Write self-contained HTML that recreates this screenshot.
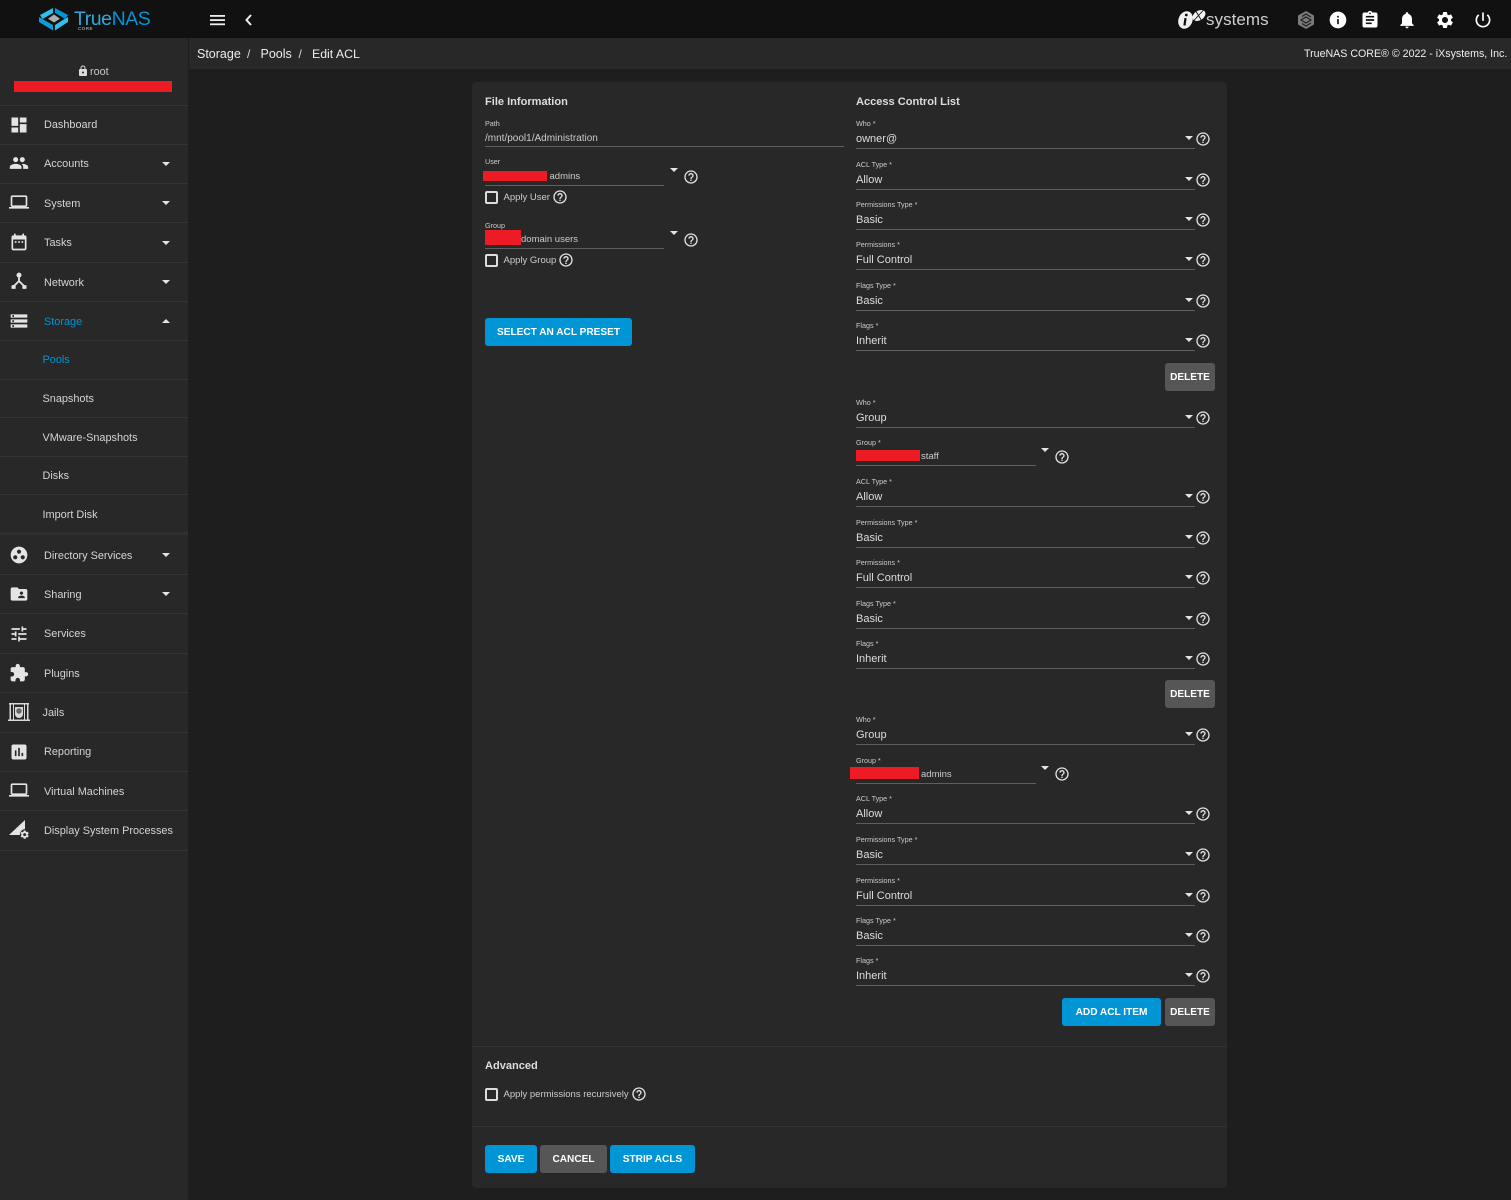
<!DOCTYPE html>
<html lang="en"><head><meta charset="utf-8"><title>TrueNAS - Edit ACL</title>
<style>
*{box-sizing:border-box}
html,body{margin:0;padding:0;width:1511px;height:1200px;overflow:hidden;background:#1e1e1e;font-family:"Liberation Sans",sans-serif;color:#e0e0e0}
.a{position:absolute}
#top{position:absolute;left:0;top:0;width:1511px;height:38px;background:#111}
#side{position:absolute;left:0;top:38px;width:188px;height:1162px;background:#282828}
#crumb{position:absolute;left:189px;top:38px;width:1322px;height:31px;background:#282828}
#card{position:absolute;left:472px;top:82px;width:755px;height:1106px;background:#282828;border-radius:4px}
.t{position:absolute;white-space:nowrap;line-height:16px;font-size:10.9px;color:#d4d4d4;margin-top:1px}
.sep{position:absolute;left:0;width:188px;height:1px;background:#343434}
.sep2{position:absolute;left:0;width:188px;height:3px;background:#303030}
.ic{position:absolute;fill:#e4e4e4}
.c{position:absolute;width:0;height:0;border-left:4px solid transparent;border-right:4px solid transparent;border-top:4px solid #e4e4e4}
.cu{border-top:0;border-bottom:4px solid #e4e4e4}
.r{position:absolute;left:856px;width:339px;height:30px;border-bottom:1px solid #5e5e5e}
.r .l{position:absolute;left:0;top:0;font-size:7.2px;line-height:10px;color:#ccc;white-space:nowrap}
.r .v{position:absolute;left:0;top:12px;font-size:11px;line-height:16px;color:#ddd;white-space:nowrap}
.r .c{left:329px;top:17px}
.r svg{position:absolute;left:339px;top:12px;width:16px;height:16px;fill:#e4e4e4}
.h{position:absolute;width:16px;height:16px;fill:#e4e4e4}
.cb{position:absolute;width:12.5px;height:12.5px;border:2px solid #ddd;border-radius:2px}
.b{position:absolute;height:28px;line-height:29px;text-align:center;color:#fff;font-size:10.1px;font-weight:bold;border-radius:3px;background:#0095d5;white-space:nowrap}
.g{background:#565656}
.red{position:absolute;background:#ed1c24}
.ln{position:absolute;height:1px;background:#5e5e5e}
.s{position:absolute;height:1px;background:#333}
.lb{font-size:7.2px;line-height:10px;color:#ccc;margin-top:0}
.sm{font-size:9.5px;color:#ccc}
.hd{font-size:11.05px;font-weight:bold;color:#ddd}
</style></head><body>
<svg width="0" height="0" style="position:absolute"><defs>
<symbol id="help" viewBox="0 0 24 24"><path d="M11 18h2v-2h-2v2zm1-16C6.48 2 2 6.48 2 12s4.48 10 10 10 10-4.48 10-10S17.52 2 12 2zm0 18c-4.41 0-8-3.59-8-8s3.59-8 8-8 8 3.59 8 8-3.59 8-8 8zm0-14c-2.21 0-4 1.79-4 4h2c0-1.1.9-2 2-2s2 .9 2 2c0 2-3 1.75-3 5h2c0-2.25 3-2.5 3-5 0-2.21-1.79-4-4-4z"/></symbol>
<symbol id="laptop" viewBox="0 0 24 24"><path d="M20 18c1.1 0 1.99-.9 1.99-2L22 6c0-1.1-.9-2-2-2H4c-1.1 0-2 .9-2 2v10c0 1.1.9 2 2 2H0v2h24v-2h-4zM4 6h16v10H4V6z"/></symbol>
</defs></svg>

<div id="top">
<svg class="a" style="left:38px;top:7px" width="32" height="24" viewBox="38 7 32 24">
<polygon fill="#31beec" points="40,15 53,8 53,13 46,17 42.5,19"/>
<polygon fill="#0095d5" points="55,8 68,15 65,19 62,17 55,13"/>
<polygon fill="#0f9ad8" points="39,17 45,20.5 53,25 53,30.5 39,22"/>
<polygon fill="#31beec" points="68,17 62,20.5 55,25 55,30.5 68,22"/>
<polygon fill="#aeadae" points="54,14.5 60,18.8 54,22.5 48,18.8"/>
</svg>
<div class="t" style="left:74px;top:6px;font-size:19.5px;line-height:24px;color:#31a8dc;letter-spacing:-.45px">True<span style="color:#0095d5">NAS</span></div>
<div class="t" style="left:78px;top:25px;font-size:4.5px;line-height:6px;color:#999;letter-spacing:.5px;font-weight:bold">CORE</div>
<svg class="a" style="left:209px;top:12px;fill:#eee" width="16" height="16" viewBox="0 0 16 16"><rect x="1" y="3" width="15" height="1.8"/><rect x="1" y="7.2" width="15" height="1.8"/><rect x="1" y="11.4" width="15" height="1.8"/></svg>
<svg class="a" style="left:243px;top:13px" width="12" height="14" viewBox="0 0 12 14"><path d="M8 2L3.5 7 8 12" fill="none" stroke="#eee" stroke-width="2"/></svg>

<svg class="a" style="left:1176px;top:6px" width="32" height="26" viewBox="0 0 32 26">
<ellipse cx="9.500" cy="14" rx="7" ry="9" fill="#f2f2f2" transform="rotate(22 9.500 14)"/>
<rect x="8" y="12" width="2.200" height="7.500" fill="#111" transform="rotate(8 9 15)"/><circle cx="10.300" cy="9" r="1.400" fill="#111"/>
<ellipse cx="23" cy="9.500" rx="7" ry="4.800" fill="#f2f2f2" transform="rotate(-32 23 9.500)"/>
<path fill="none" stroke="#111" stroke-width=".9" d="M17.500 15L27.500 4M19.500 4.500l6 10"/>
</svg>
<div class="t" style="left:1206px;top:9px;font-size:17px;line-height:20px;color:#cfcfcf;letter-spacing:.05px">systems</div>
<svg class="a" style="left:1296px;top:10px" width="20" height="20" viewBox="0 0 20 20"><polygon fill="#7b7b7b" points="10,1 18,5.500 18,14.500 10,19 2,14.500 2,5.500"/><path d="M6 6.500L10 4l5 3M5 10l5-3 5 3-5 3zM6 13.500l4 2.500 5-3" fill="none" stroke="#222" stroke-width="1.200"/></svg>
<svg class="ic" style="left:1328px;top:10px" width="20" height="20" viewBox="0 0 24 24"><path fill="#fff" d="M12 2C6.480 2 2 6.480 2 12s4.480 10 10 10 10-4.480 10-10S17.520 2 12 2zm1 15h-2v-6h2v6zm0-8h-2V7h2v2z"/></svg>
<svg class="ic" style="left:1359.500px;top:10px" width="20" height="20" viewBox="0 0 24 24"><path fill="#fff" d="M19 3h-4.180C14.400 1.840 13.300 1 12 1c-1.300 0-2.400.840-2.820 2H5c-1.100 0-2 .900-2 2v14c0 1.100.900 2 2 2h14c1.100 0 2-.900 2-2V5c0-1.100-.900-2-2-2zm-7 0c.550 0 1 .450 1 1s-.450 1-1 1-1-.450-1-1 .450-1 1-1zm2 14H7v-2h7v2zm3-4H7v-2h10v2zm0-4H7V7h10v2z"/></svg>
<svg class="ic" style="left:1397px;top:10px" width="20" height="20" viewBox="0 0 24 24"><path fill="#fff" d="M12 22c1.100 0 2-.900 2-2h-4c0 1.100.890 2 2 2zm6-6v-5c0-3.070-1.640-5.640-4.500-6.320V4c0-.830-.670-1.500-1.500-1.500s-1.500.670-1.500 1.500v.680C7.630 5.360 6 7.920 6 11v5l-2 2v1h16v-1l-2-2z"/></svg>
<svg class="ic" style="left:1435px;top:10px" width="20" height="20" viewBox="0 0 24 24"><path fill="#fff" d="M19.140 12.940c.040-.300.060-.610.060-.940 0-.320-.020-.640-.070-.940l2.030-1.580c.180-.140.230-.410.120-.610l-1.920-3.320c-.120-.220-.370-.290-.590-.220l-2.390.960c-.500-.380-1.030-.700-1.620-.940l-.360-2.540c-.040-.240-.240-.410-.480-.410h-3.840c-.240 0-.430.170-.470.410l-.360 2.540c-.590.240-1.130.570-1.620.940l-2.390-.960c-.220-.080-.470 0-.590.220L2.740 8.870c-.120.210-.080.470.120.610l2.030 1.580c-.050.300-.090.630-.090.940s.020.640.070.940l-2.030 1.580c-.180.140-.230.410-.120.610l1.920 3.320c.120.220.370.290.590.220l2.390-.960c.500.380 1.030.700 1.620.940l.360 2.540c.050.240.240.410.480.410h3.840c.240 0 .440-.170.470-.410l.360-2.540c.590-.240 1.130-.560 1.620-.940l2.390.960c.220.080.470 0 .590-.220l1.920-3.320c.120-.220.070-.470-.120-.610l-2.010-1.580zM12 15.600c-1.980 0-3.600-1.620-3.600-3.600s1.620-3.600 3.600-3.600 3.600 1.620 3.600 3.600-1.620 3.600-3.600 3.600z"/></svg>
<svg class="ic" style="left:1472.500px;top:10px" width="20" height="20" viewBox="0 0 24 24"><path fill="#fff" d="M13 3h-2v10h2V3zm4.830 2.170l-1.420 1.420C17.990 7.860 19 9.810 19 12c0 3.870-3.130 7-7 7s-7-3.130-7-7c0-2.190 1.010-4.140 2.580-5.420L6.170 5.170C4.230 6.820 3 9.260 3 12c0 4.970 4.030 9 9 9s9-4.030 9-9c0-2.740-1.230-5.180-3.170-6.830z"/></svg>
</div>

<div id="side"></div>
<div id="crumb"></div>
<div class="t" style="left:197px;top:45px;font-size:12.5px;color:#eee">Storage</div>
<div class="t" style="left:247px;top:45px;font-size:12px;color:#ddd">/</div>
<div class="t" style="left:260.500px;top:45px;font-size:12.5px;color:#eee">Pools</div>
<div class="t" style="left:298.500px;top:45px;font-size:12px;color:#ddd">/</div>
<div class="t" style="left:312px;top:45px;font-size:12.3px;color:#eee">Edit ACL</div>
<div class="t" style="left:1304px;top:45px;font-size:10.65px;color:#eee">TrueNAS CORE® © 2022 - iXsystems, Inc.</div>

<svg class="ic" style="left:76.500px;top:65px" width="12" height="12" viewBox="0 0 24 24"><path fill="#ddd" d="M18 8h-1V6c0-2.760-2.240-5-5-5S7 3.240 7 6v2H6c-1.100 0-2 .900-2 2v10c0 1.100.900 2 2 2h12c1.100 0 2-.900 2-2V10c0-1.100-.900-2-2-2zm-6 9c-1.100 0-2-.900-2-2s.900-2 2-2 2 .900 2 2-.900 2-2 2zm3.100-9H8.900V6c0-1.710 1.390-3.100 3.100-3.100 1.710 0 3.100 1.390 3.100 3.100v2z"/></svg>
<div class="t" style="left:90px;top:63px;font-size:10.8px;color:#c8c8c8">root</div>
<div class="red" style="left:14px;top:81px;width:158px;height:11px"></div>

<div class="sep" style="top:105px"></div><div class="sep" style="top:144px"></div><div class="sep" style="top:183px"></div><div class="sep" style="top:222px"></div><div class="sep" style="top:262px"></div><div class="sep" style="top:301px"></div><div class="sep" style="top:340px"></div><div class="sep" style="top:379px"></div><div class="sep" style="top:417px"></div><div class="sep" style="top:456px"></div><div class="sep" style="top:494px"></div><div class="sep2" style="top:532px"></div><div class="sep" style="top:574px"></div><div class="sep" style="top:613px"></div><div class="sep" style="top:653px"></div><div class="sep" style="top:692px"></div><div class="sep" style="top:732px"></div><div class="sep" style="top:771px"></div><div class="sep" style="top:810px"></div><div class="sep" style="top:850px"></div>

<div class="t" style="left:44px;top:116px">Dashboard</div>
<div class="t" style="left:44px;top:155px">Accounts</div><div class="c" style="left:162px;top:162px"></div>
<div class="t" style="left:44px;top:195px">System</div><div class="c" style="left:162px;top:201px"></div>
<div class="t" style="left:44px;top:234px">Tasks</div><div class="c" style="left:162px;top:241px"></div>
<div class="t" style="left:44px;top:274px">Network</div><div class="c" style="left:162px;top:280px"></div>
<div class="t" style="left:44px;top:313px;color:#0095d5">Storage</div><div class="c cu" style="left:162px;top:319px"></div>
<div class="t" style="left:42.500px;top:351px;color:#0095d5">Pools</div>
<div class="t" style="left:42.500px;top:390px">Snapshots</div>
<div class="t" style="left:42.500px;top:429px">VMware-Snapshots</div>
<div class="t" style="left:42.500px;top:467px">Disks</div>
<div class="t" style="left:42.500px;top:506px">Import Disk</div>
<div class="t" style="left:44px;top:547px">Directory Services</div><div class="c" style="left:162px;top:553px"></div>
<div class="t" style="left:44px;top:586px">Sharing</div><div class="c" style="left:162px;top:592px"></div>
<div class="t" style="left:44px;top:625px">Services</div>
<div class="t" style="left:44px;top:665px">Plugins</div>
<div class="t" style="left:42.500px;top:704px">Jails</div>
<div class="t" style="left:44px;top:743px">Reporting</div>
<div class="t" style="left:44px;top:783px">Virtual Machines</div>
<div class="t" style="left:44px;top:822px">Display System Processes</div>

<svg class="ic" style="left:9px;top:114.500px" width="20" height="20" viewBox="0 0 24 24"><path d="M3 13h8V3H3v10zm0 8h8v-6H3v6zm10 0h8V11h-8v10zm0-18v6h8V3h-8z"/></svg>
<svg class="ic" style="left:9px;top:153px" width="20" height="20" viewBox="0 0 24 24"><path d="M16 11c1.660 0 2.990-1.340 2.990-3S17.660 5 16 5c-1.660 0-3 1.340-3 3s1.340 3 3 3zm-8 0c1.660 0 2.990-1.340 2.990-3S9.660 5 8 5C6.340 5 5 6.340 5 8s1.340 3 3 3zm0 2c-2.330 0-7 1.170-7 3.500V19h14v-2.500c0-2.330-4.670-3.500-7-3.500zm8 0c-.290 0-.620.020-.970.050 1.160.840 1.970 1.970 1.970 3.450V19h6v-2.500c0-2.330-4.670-3.500-7-3.500z"/></svg>
<svg class="ic" style="left:9px;top:192px" width="20" height="20" viewBox="0 0 24 24"><use href="#laptop"/></svg>
<svg class="ic" style="left:9px;top:232px" width="20" height="20" viewBox="0 0 24 24"><path d="M19 4h-1V2h-2v2H8V2H6v2H5c-1.100 0-2 .900-2 2v14c0 1.100.900 2 2 2h14c1.100 0 2-.900 2-2V6c0-1.100-.900-2-2-2zm0 16H5V9h14v11z"/><rect x="7" y="11" width="2" height="2"/><rect x="11" y="11" width="2" height="2"/><rect x="15" y="11" width="2" height="2"/></svg>
<svg class="ic" style="left:9px;top:271px" width="20" height="20" viewBox="0 0 24 24"><circle cx="12" cy="5" r="3"/><rect x="3" y="17" width="5" height="4.500" rx="1"/><rect x="16" y="17" width="5" height="4.500" rx="1"/><path d="M12 7v6M12 12l-6 6M12 12l6 6" stroke="#e4e4e4" stroke-width="2.200" fill="none"/></svg>
<svg class="ic" style="left:9px;top:311px" width="20" height="20" viewBox="0 0 24 24"><path d="M2 20h20v-4H2v4zm2-3h2v2H4v-2zM2 4v4h20V4H2zm4 3H4V5h2v2zm-4 7h20v-4H2v4zm2-3h2v2H4v-2z"/></svg>
<svg class="ic" style="left:9px;top:544.500px" width="20" height="20" viewBox="0 0 24 24"><path fill-rule="evenodd" d="M12 2a10 10 0 1 0 0 20 10 10 0 0 0 0-20zm0 3.500a2.500 2.500 0 1 1 0 5 2.500 2.500 0 0 1 0-5zm-4.500 6.800a2.500 2.500 0 1 1 0 5 2.500 2.500 0 0 1 0-5zm9 0a2.500 2.500 0 1 1 0 5 2.500 2.500 0 0 1 0-5z"/></svg>
<svg class="ic" style="left:9px;top:584px" width="20" height="20" viewBox="0 0 24 24"><path d="M20 6h-8l-2-2H4c-1.100 0-2 .900-2 2v12c0 1.100.900 2 2 2h16c1.100 0 2-.900 2-2V8c0-1.100-.900-2-2-2zm-5 3c1.100 0 2 .900 2 2s-.900 2-2 2-2-.900-2-2 .900-2 2-2zm4 8h-8v-1c0-1.330 2.670-2 4-2s4 .670 4 2v1z"/></svg>
<svg class="ic" style="left:9px;top:623.500px" width="20" height="20" viewBox="0 0 24 24"><path d="M3 17v2h6v-2H3zM3 5v2h10V5H3zm10 16v-2h8v-2h-8v-2h-2v6h2zM7 9v2H3v2h4v2h2V9H7zm14 4v-2H11v2h10zm-6-4h2V7h4V5h-4V3h-2v6z"/></svg>
<svg class="ic" style="left:9px;top:662.500px" width="20" height="20" viewBox="0 0 24 24"><path d="M20.500 11H19V7c0-1.100-.900-2-2-2h-4V3.500C13 2.120 11.880 1 10.500 1S8 2.120 8 3.500V5H4c-1.100 0-1.990.900-1.990 2v3.800H3.500c1.490 0 2.700 1.210 2.700 2.700s-1.210 2.700-2.700 2.700H2V20c0 1.100.900 2 2 2h3.800v-1.500c0-1.490 1.210-2.700 2.700-2.700 1.490 0 2.700 1.210 2.700 2.700V22H17c1.100 0 2-.900 2-2v-4h1.500c1.380 0 2.500-1.120 2.500-2.500S21.880 11 20.500 11z"/></svg>
<svg class="a" style="left:8px;top:702px" width="22" height="20" viewBox="0 0 22 20"><g fill="#d8d8d8"><rect x="1" y="1" width="20" height="1.500"/><rect x="0" y="17.500" width="22" height="1.500"/><rect x="1.500" y="2" width="1.500" height="16"/><rect x="19" y="2" width="1.500" height="16"/><rect x="5" y="2" width="1" height="16"/><rect x="16" y="2" width="1" height="16"/><path d="M7 5h8v7c0 2.500-2 4-4 4s-4-1.500-4-4z"/></g><circle cx="11" cy="9" r="2.800" fill="#666"/></svg>
<svg class="ic" style="left:9px;top:741.500px" width="20" height="20" viewBox="0 0 24 24"><path d="M19 3H5c-1.100 0-2 .900-2 2v14c0 1.100.900 2 2 2h14c1.100 0 2-.900 2-2V5c0-1.100-.900-2-2-2zM9 17H7v-7h2v7zm4 0h-2V7h2v10zm4 0h-2v-4h2v4z"/></svg>
<svg class="ic" style="left:9px;top:780px" width="20" height="20" viewBox="0 0 24 24"><use href="#laptop"/></svg>
<svg class="a" style="left:9px;top:819px;fill:#e4e4e4" width="21" height="21" viewBox="0 0 21 21"><path d="M0 16L16 1v9a5.500 5.500 0 0 0-5 6z"/><g transform="translate(10.500,10.500) scale(.43)"><path d="M19.140 12.940c.040-.300.060-.610.060-.940 0-.320-.020-.640-.070-.940l2.030-1.580c.180-.140.230-.410.120-.610l-1.920-3.320c-.120-.220-.370-.290-.590-.220l-2.390.960c-.500-.380-1.030-.700-1.620-.940l-.360-2.540c-.040-.240-.240-.410-.480-.410h-3.840c-.240 0-.430.170-.470.410l-.360 2.540c-.590.240-1.130.570-1.620.940l-2.390-.960c-.220-.080-.470 0-.590.220L2.740 8.870c-.120.210-.080.470.120.610l2.030 1.580c-.050.300-.090.630-.090.940s.020.640.070.940l-2.030 1.580c-.180.140-.230.410-.120.610l1.920 3.320c.120.220.370.290.590.220l2.390-.960c.500.380 1.030.700 1.620.940l.360 2.540c.050.240.240.410.480.410h3.840c.240 0 .440-.170.470-.410l.360-2.540c.590-.240 1.130-.560 1.620-.940l2.390.960c.220.080.470 0 .590-.220l1.920-3.320c.120-.220.070-.470-.120-.610l-2.010-1.580zM12 15.600c-1.980 0-3.600-1.620-3.600-3.600s1.620-3.600 3.600-3.600 3.600 1.620 3.600 3.600-1.620 3.600-3.600 3.600z"/></g></svg>

<div id="card"></div>
<div class="s" style="left:472px;top:1046px;width:755px"></div>
<div class="s" style="left:472px;top:1126px;width:755px"></div>

<div class="t hd" style="left:485px;top:93px">File Information</div>
<div class="t hd" style="left:856px;top:93px">Access Control List</div>

<div class="t lb" style="left:485px;top:119px">Path</div>
<div class="t sm" style="left:485px;top:130px;font-size:10px">/mnt/pool1/Administration</div>
<div class="ln" style="left:485px;top:146px;width:359px"></div>

<div class="t lb" style="left:485px;top:157px">User</div>
<div class="red" style="left:483px;top:171px;width:64px;height:10px"></div>
<div class="t sm" style="left:549.500px;top:168px">admins</div>
<div class="ln" style="left:485px;top:185px;width:179px"></div>
<div class="c" style="left:670px;top:168px"></div>
<svg class="h" style="left:683px;top:169px"><use href="#help" width="16" height="16"/></svg>
<div class="cb" style="left:485px;top:191px"></div>
<div class="t sm" style="left:503.500px;top:189px">Apply User</div>
<svg class="h" style="left:552px;top:189px"><use href="#help" width="16" height="16"/></svg>

<div class="t lb" style="left:485px;top:221px">Group</div>
<div class="red" style="left:485px;top:230px;width:36px;height:15px"></div>
<div class="t sm" style="left:521px;top:231px">domain users</div>
<div class="ln" style="left:485px;top:248px;width:179px"></div>
<div class="c" style="left:670px;top:231px"></div>
<svg class="h" style="left:683px;top:232px"><use href="#help" width="16" height="16"/></svg>
<div class="cb" style="left:485px;top:254px"></div>
<div class="t sm" style="left:503.500px;top:252px">Apply Group</div>
<svg class="h" style="left:558px;top:252px"><use href="#help" width="16" height="16"/></svg>

<div class="b" style="left:485px;top:318px;width:147px">SELECT AN ACL PRESET</div>

<div class="r" style="top:119px"><span class="l">Who *</span><span class="v">owner@</span><i class="c"></i><svg><use href="#help" width="16" height="16"/></svg></div>
<div class="r" style="top:160px"><span class="l">ACL Type *</span><span class="v">Allow</span><i class="c"></i><svg><use href="#help" width="16" height="16"/></svg></div>
<div class="r" style="top:200px"><span class="l">Permissions Type *</span><span class="v">Basic</span><i class="c"></i><svg><use href="#help" width="16" height="16"/></svg></div>
<div class="r" style="top:240px"><span class="l">Permissions *</span><span class="v">Full Control</span><i class="c"></i><svg><use href="#help" width="16" height="16"/></svg></div>
<div class="r" style="top:281px"><span class="l">Flags Type *</span><span class="v">Basic</span><i class="c"></i><svg><use href="#help" width="16" height="16"/></svg></div>
<div class="r" style="top:321px"><span class="l">Flags *</span><span class="v">Inherit</span><i class="c"></i><svg><use href="#help" width="16" height="16"/></svg></div>
<div class="b g" style="left:1165px;top:363px;width:50px">DELETE</div>

<div class="r" style="top:398px"><span class="l">Who *</span><span class="v">Group</span><i class="c"></i><svg><use href="#help" width="16" height="16"/></svg></div>
<div class="t lb" style="left:856px;top:438px">Group *</div>
<div class="red" style="left:856px;top:450px;width:64px;height:11px"></div>
<div class="t sm" style="left:921px;top:448px">staff</div>
<div class="ln" style="left:856px;top:465px;width:180px"></div>
<div class="c" style="left:1041px;top:448px"></div>
<svg class="h" style="left:1054px;top:449px"><use href="#help" width="16" height="16"/></svg>
<div class="r" style="top:477px"><span class="l">ACL Type *</span><span class="v">Allow</span><i class="c"></i><svg><use href="#help" width="16" height="16"/></svg></div>
<div class="r" style="top:518px"><span class="l">Permissions Type *</span><span class="v">Basic</span><i class="c"></i><svg><use href="#help" width="16" height="16"/></svg></div>
<div class="r" style="top:558px"><span class="l">Permissions *</span><span class="v">Full Control</span><i class="c"></i><svg><use href="#help" width="16" height="16"/></svg></div>
<div class="r" style="top:599px"><span class="l">Flags Type *</span><span class="v">Basic</span><i class="c"></i><svg><use href="#help" width="16" height="16"/></svg></div>
<div class="r" style="top:639px"><span class="l">Flags *</span><span class="v">Inherit</span><i class="c"></i><svg><use href="#help" width="16" height="16"/></svg></div>
<div class="b g" style="left:1165px;top:680px;width:50px">DELETE</div>

<div class="r" style="top:715px"><span class="l">Who *</span><span class="v">Group</span><i class="c"></i><svg><use href="#help" width="16" height="16"/></svg></div>
<div class="t lb" style="left:856px;top:756px">Group *</div>
<div class="red" style="left:850px;top:767px;width:69px;height:12px"></div>
<div class="t sm" style="left:921px;top:766px">admins</div>
<div class="ln" style="left:856px;top:783px;width:180px"></div>
<div class="c" style="left:1041px;top:766px"></div>
<svg class="h" style="left:1054px;top:766px"><use href="#help" width="16" height="16"/></svg>
<div class="r" style="top:794px"><span class="l">ACL Type *</span><span class="v">Allow</span><i class="c"></i><svg><use href="#help" width="16" height="16"/></svg></div>
<div class="r" style="top:835px"><span class="l">Permissions Type *</span><span class="v">Basic</span><i class="c"></i><svg><use href="#help" width="16" height="16"/></svg></div>
<div class="r" style="top:876px"><span class="l">Permissions *</span><span class="v">Full Control</span><i class="c"></i><svg><use href="#help" width="16" height="16"/></svg></div>
<div class="r" style="top:916px"><span class="l">Flags Type *</span><span class="v">Basic</span><i class="c"></i><svg><use href="#help" width="16" height="16"/></svg></div>
<div class="r" style="top:956px"><span class="l">Flags *</span><span class="v">Inherit</span><i class="c"></i><svg><use href="#help" width="16" height="16"/></svg></div>
<div class="b" style="left:1062px;top:998px;width:99px">ADD ACL ITEM</div>
<div class="b g" style="left:1165px;top:998px;width:50px">DELETE</div>

<div class="t hd" style="left:485px;top:1057px">Advanced</div>
<div class="cb" style="left:485px;top:1088px"></div>
<div class="t sm" style="left:503.500px;top:1086px">Apply permissions recursively</div>
<svg class="h" style="left:631px;top:1086px"><use href="#help" width="16" height="16"/></svg>

<div class="b" style="left:485px;top:1145px;width:52px">SAVE</div>
<div class="b g" style="left:540px;top:1145px;width:67px">CANCEL</div>
<div class="b" style="left:610px;top:1145px;width:85px">STRIP ACLS</div>
</body></html>
